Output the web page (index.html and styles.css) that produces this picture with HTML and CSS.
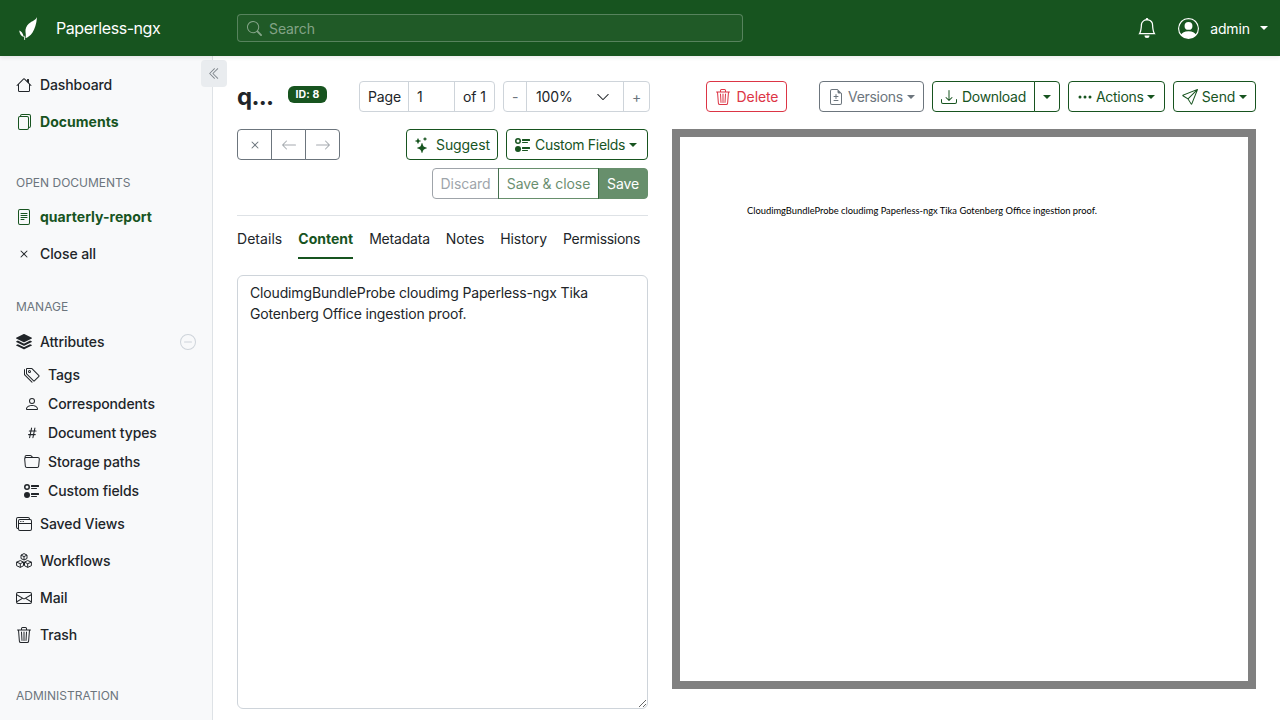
FILE: index.html
```html
<!DOCTYPE html>
<html lang="en">
<head>
<meta charset="utf-8">
<title>Paperless-ngx</title>
<link rel="stylesheet" href="styles.css">
</head>
<body>
<header class="topbar">
  <svg class="logo" viewBox="0 0 18 23" fill="#fff"><path d="M18 0C17 3 13 4 10 6.500 7.500 8.500 6 12 6.500 15c.3 2 .5 4 0 6.200C11 20 17 14 18 0z"/><path d="M.2 13.500c2 .7 3.800 2.500 4.600 6.500C2.500 19.500.7 17 .2 13.500z"/><path d="M4.700 19l.8-.2.7 4.200-.8 0z"/></svg>
  <span class="brand">Paperless-ngx</span>
  <div class="search">
    <svg class="ic" viewBox="0 0 16 16" fill="currentColor"><path d="M11.742 10.344a6.500 6.500 0 1 0-1.397 1.398h-.001c.03.04.062.078.098.115l3.850 3.850a1 1 0 0 0 1.415-1.414l-3.850-3.850a1.007 1.007 0 0 0-.115-.1zM12 6.500a5.500 5.500 0 1 1-11 0 5.500 5.500 0 0 1 11 0z"/></svg>
    <span>Search</span>
  </div>
  <div class="top-right">
    <svg class="bell" viewBox="0 0 16 16" fill="currentColor"><path d="M8 16a2 2 0 0 0 2-2H6a2 2 0 0 0 2 2zM8 1.918l-.797.161A4.002 4.002 0 0 0 4 6c0 .628-.134 2.197-.459 3.742-.16.767-.376 1.566-.663 2.258h10.244c-.287-.692-.502-1.490-.663-2.258C12.134 8.197 12 6.628 12 6a4.002 4.002 0 0 0-3.203-3.920L8 1.917zM14.220 12c.223.447.481.801.78 1H1c.299-.199.557-.553.78-1C2.680 10.200 3 6.880 3 6c0-2.420 1.720-4.440 4.005-4.901a1 1 0 1 1 1.990 0A5.002 5.002 0 0 1 13 6c0 .88.32 4.200 1.220 6z"/></svg>
    <svg class="avatar" viewBox="0 0 16 16" fill="currentColor"><path d="M11 6a3 3 0 1 1-6 0 3 3 0 0 1 6 0z"/><path fill-rule="evenodd" d="M0 8a8 8 0 1 1 16 0A8 8 0 0 1 0 8zm8-7a7 7 0 0 0-5.468 11.370C3.242 11.226 4.805 10 8 10s4.757 1.225 5.468 2.370A7 7 0 0 0 8 1z"/></svg>
    <span class="user">admin</span>
    <i class="caret"></i>
  </div>
</header>

<div class="shell">
  <nav class="sidebar">
    <button class="collapse" type="button" aria-label="Collapse"><svg class="ic" viewBox="0 0 16 16" fill="currentColor"><path d="M8.354 1.646a.5.5 0 0 1 0 .708L2.707 8l5.647 5.646a.5.5 0 0 1-.708.708l-6-6a.5.5 0 0 1 0-.708l6-6a.5.5 0 0 1 .708 0z"/><path d="M12.354 1.646a.5.5 0 0 1 0 .708L6.707 8l5.647 5.646a.5.5 0 0 1-.708.708l-6-6a.5.5 0 0 1 0-.708l6-6a.5.5 0 0 1 .708 0z"/></svg></button>
    <a class="item"><svg class="ic" viewBox="0 0 16 16" fill="currentColor"><path d="M8.707 1.500a1 1 0 0 0-1.414 0L.646 8.146a.5.5 0 0 0 .708.708L2 8.207V13.500A1.500 1.500 0 0 0 3.500 15h9a1.500 1.500 0 0 0 1.500-1.500V8.207l.646.647a.5.5 0 0 0 .708-.708L13 5.793V2.500a.5.5 0 0 0-.5-.5h-1a.5.5 0 0 0-.5.5v1.293L8.707 1.500ZM13 7.207V13.500a.5.5 0 0 1-.5.5h-9a.5.5 0 0 1-.5-.5V7.207l5-5 5 5Z"/></svg>Dashboard</a>
    <a class="item active"><svg class="ic" viewBox="0 0 16 16" fill="currentColor"><path d="M13 0H6a2 2 0 0 0-2 2 2 2 0 0 0-2 2v10a2 2 0 0 0 2 2h7a2 2 0 0 0 2-2 2 2 0 0 0 2-2V2a2 2 0 0 0-2-2zm0 13V4a2 2 0 0 0-2-2H5a1 1 0 0 1 1-1h7a1 1 0 0 1 1 1v10a1 1 0 0 1-1 1zM3 4a1 1 0 0 1 1-1h7a1 1 0 0 1 1 1v10a1 1 0 0 1-1 1H4a1 1 0 0 1-1-1V4z"/></svg>Documents</a>

    <h6 class="heading">Open documents</h6>
    <a class="item active"><svg class="ic" viewBox="0 0 16 16" fill="currentColor"><path d="M5 4a.5.5 0 0 0 0 1h6a.5.5 0 0 0 0-1H5zm-.5 2.500A.5.5 0 0 1 5 6h6a.5.5 0 0 1 0 1H5a.5.5 0 0 1-.5-.5zM5 8a.5.5 0 0 0 0 1h6a.5.5 0 0 0 0-1H5zm0 2a.5.5 0 0 0 0 1h3a.5.5 0 0 0 0-1H5z"/><path d="M2 2a2 2 0 0 1 2-2h8a2 2 0 0 1 2 2v12a2 2 0 0 1-2 2H4a2 2 0 0 1-2-2V2zm10-1H4a1 1 0 0 0-1 1v12a1 1 0 0 0 1 1h8a1 1 0 0 0 1-1V2a1 1 0 0 0-1-1z"/></svg>quarterly-report</a>
    <a class="item"><svg class="ic" viewBox="0 0 16 16" fill="currentColor"><path d="M4.646 4.646a.5.5 0 0 1 .708 0L8 7.293l2.646-2.647a.5.5 0 0 1 .708.708L8.707 8l2.647 2.646a.5.5 0 0 1-.708.708L8 8.707l-2.646 2.647a.5.5 0 0 1-.708-.708L7.293 8 4.646 5.354a.5.5 0 0 1 0-.708z"/></svg>Close all</a>

    <h6 class="heading tight">Manage</h6>
    <a class="item"><svg class="ic" viewBox="0 0 16 16" fill="currentColor"><path d="M14.120 10.163l1.715.858c.22.11.22.424 0 .534L8.267 15.340a.598.598 0 0 1-.534 0L.165 11.555a.299.299 0 0 1 0-.534l1.716-.858 5.317 2.659c.505.252 1.100.252 1.604 0l5.317-2.660zM7.733.063a.598.598 0 0 1 .534 0l7.568 3.784a.3.3 0 0 1 0 .535L8.267 8.165a.598.598 0 0 1-.534 0L.165 4.382a.299.299 0 0 1 0-.535L7.733.063z"/><path d="M14.120 6.576l1.715.858c.22.11.22.424 0 .534l-7.568 3.784a.598.598 0 0 1-.534 0L.165 7.968a.299.299 0 0 1 0-.534l1.716-.858 5.317 2.659c.505.252 1.100.252 1.604 0l5.317-2.659z"/></svg>Attributes
      <svg class="ic minus" viewBox="0 0 16 16" fill="currentColor"><path d="M8 15A7 7 0 1 1 8 1a7 7 0 0 1 0 14zm0 1A8 8 0 1 0 8 0a8 8 0 0 0 0 16z"/><path d="M4 8a.5.5 0 0 1 .5-.5h7a.5.5 0 0 1 0 1h-7A.5.5 0 0 1 4 8z"/></svg></a>
    <a class="item sub"><svg class="ic" viewBox="0 0 16 16" fill="currentColor"><path d="M3 2v4.586l7 7L14.586 9l-7-7H3zM2 2a1 1 0 0 1 1-1h4.586a1 1 0 0 1 .707.293l7 7a1 1 0 0 1 0 1.414l-4.586 4.586a1 1 0 0 1-1.414 0l-7-7A1 1 0 0 1 2 6.586V2z"/><path d="M5.500 5a.5.5 0 1 1 0-1 .5.5 0 0 1 0 1zm0 1a1.500 1.500 0 1 0 0-3 1.500 1.500 0 0 0 0 3zM1 7.086a1 1 0 0 0 .293.707L8.750 15.250l-.043.043a1 1 0 0 1-1.414 0l-7-7A1 1 0 0 1 0 7.586V3a1 1 0 0 1 1-1v5.086z"/></svg>Tags</a>
    <a class="item sub"><svg class="ic" viewBox="0 0 16 16" fill="currentColor"><path d="M8 8a3 3 0 1 0 0-6 3 3 0 0 0 0 6Zm2-3a2 2 0 1 1-4 0 2 2 0 0 1 4 0Zm4 8c0 1-1 1-1 1H3s-1 0-1-1 1-4 6-4 6 3 6 4Zm-1-.004c-.001-.246-.154-.986-.832-1.664C11.516 10.680 10.289 10 8 10c-2.290 0-3.516.68-4.168 1.332-.678.678-.83 1.418-.832 1.664h10Z"/></svg>Correspondents</a>
    <a class="item sub"><svg class="ic" viewBox="0 0 16 16" fill="currentColor"><path d="M8.390 12.648a1.320 1.320 0 0 0-.015.18c0 .305.21.508.5.508.266 0 .492-.172.555-.477l.554-2.703h1.204c.421 0 .617-.234.617-.547 0-.312-.188-.53-.617-.53h-.985l.516-2.524h1.265c.43 0 .618-.227.618-.547 0-.313-.188-.524-.618-.524h-1.046l.476-2.304a1.060 1.060 0 0 0 .016-.164.51.51 0 0 0-.516-.516.54.54 0 0 0-.539.43l-.523 2.554H7.617l.477-2.304c.008-.04.015-.118.015-.164a.512.512 0 0 0-.523-.516.539.539 0 0 0-.531.43L6.530 5.484H5.414c-.43 0-.617.22-.617.532 0 .312.187.539.617.539h.906l-.515 2.523H4.609c-.421 0-.609.219-.609.531 0 .313.188.547.61.547h.976l-.516 2.492c-.008.04-.015.125-.015.18 0 .305.21.508.5.508.265 0 .492-.172.554-.477l.555-2.703h2.242l-.515 2.492zm-1-6.109h2.266l-.515 2.563H6.859l.532-2.563z"/></svg>Document types</a>
    <a class="item sub"><svg class="ic" viewBox="0 0 16 16" fill="currentColor"><path d="M.54 3.870.5 3a2 2 0 0 1 2-2h3.672a2 2 0 0 1 1.414.586l.828.828A2 2 0 0 0 9.828 3h3.982a2 2 0 0 1 1.992 2.181l-.637 7A2 2 0 0 1 13.174 14H2.826a2 2 0 0 1-1.991-1.819l-.637-7a1.990 1.990 0 0 1 .342-1.310zM2.190 4a1 1 0 0 0-.996 1.090l.637 7a1 1 0 0 0 .995.91h10.348a1 1 0 0 0 .995-.91l.637-7A1 1 0 0 0 13.810 4H2.190zm4.690-1.707A1 1 0 0 0 6.172 2H2.500a1 1 0 0 0-1 .981l.006.139C1.720 3.042 1.950 3 2.190 3h5.396l-.707-.707z"/></svg>Storage paths</a>
    <a class="item sub"><svg class="ic" viewBox="0 0 16 16" fill="currentColor"><path d="M7 2.500a.5.5 0 0 1 .5-.5h7a.5.5 0 0 1 .5.5v1a.5.5 0 0 1-.5.5h-7a.5.5 0 0 1-.5-.5v-1zM0 12a3 3 0 1 1 6 0 3 3 0 0 1-6 0zm7-1.500a.5.5 0 0 1 .5-.5h7a.5.5 0 0 1 .5.5v1a.5.5 0 0 1-.5.5h-7a.5.5 0 0 1-.5-.5v-1zm0-5a.5.5 0 0 1 .5-.5h5a.5.5 0 0 1 0 1h-5a.5.5 0 0 1-.5-.5zm0 8a.5.5 0 0 1 .5-.5h5a.5.5 0 0 1 0 1h-5a.5.5 0 0 1-.5-.5zM3 1a3 3 0 1 0 0 6 3 3 0 0 0 0-6zm0 4.500a1.500 1.500 0 1 1 0-3 1.500 1.500 0 0 1 0 3z"/></svg>Custom fields</a>
    <a class="item"><svg class="ic" viewBox="0 0 16 16" fill="currentColor"><path d="M4.500 6a.5.5 0 1 0 0-1 .5.5 0 0 0 0 1ZM6 6a.5.5 0 1 0 0-1 .5.5 0 0 0 0 1Zm2-.5a.5.5 0 1 1-1 0 .5.5 0 0 1 1 0Z"/><path d="M12 1a2 2 0 0 1 2 2 2 2 0 0 1 2 2v8a2 2 0 0 1-2 2H4a2 2 0 0 1-2-2 2 2 0 0 1-2-2V3a2 2 0 0 1 2-2h10ZM2 12V5a2 2 0 0 1 2-2h9a1 1 0 0 0-1-1H2a1 1 0 0 0-1 1v8a1 1 0 0 0 1 1Zm1-4v5a1 1 0 0 0 1 1h10a1 1 0 0 0 1-1V8H3Zm12-1V5a1 1 0 0 0-1-1H4a1 1 0 0 0-1 1v2h12Z"/></svg>Saved Views</a>
    <a class="item"><svg class="ic" viewBox="0 0 16 16" fill="none" stroke="currentColor" stroke-width="1" stroke-linejoin="round"><path d="M8 .6l3 1.500v3.400L8 7 5 5.500V2.100zM5 2.100l3 1.500 3-1.500M8 3.600V7"/><path d="M4.300 7.600L7.500 9.100v3.600L4.300 14.400 .6 12.700V9.100zM.6 9.100l3.700 1.600 3.200-1.600M4.300 10.700v3.700"/><path d="M11.700 7.600l3.700 1.500v3.600l-3.700 1.700-3.200-1.700V9.100zM8.500 9.100l3.200 1.600 3.700-1.600M11.700 10.700v3.700"/></svg>Workflows</a>
    <a class="item"><svg class="ic" viewBox="0 0 16 16" fill="currentColor"><path d="M0 4a2 2 0 0 1 2-2h12a2 2 0 0 1 2 2v8a2 2 0 0 1-2 2H2a2 2 0 0 1-2-2V4Zm2-1a1 1 0 0 0-1 1v.217l7 4.200 7-4.200V4a1 1 0 0 0-1-1H2Zm13 2.383-4.708 2.825L15 11.105V5.383Zm-.034 6.876-5.640-3.471L8 9.583l-1.326-.795-5.640 3.470A1 1 0 0 0 2 13h12a1 1 0 0 0 .966-.741ZM1 11.105l4.708-2.897L1 5.383v5.722Z"/></svg>Mail</a>
    <a class="item"><svg class="ic" viewBox="0 0 16 16" fill="currentColor"><path d="M6.500 1h3a.5.5 0 0 1 .5.5v1H6v-1a.5.5 0 0 1 .5-.5ZM11 2.500v-1A1.500 1.500 0 0 0 9.500 0h-3A1.500 1.500 0 0 0 5 1.500v1H1.500a.5.5 0 0 0 0 1h.538l.853 10.660A2 2 0 0 0 4.885 16h6.230a2 2 0 0 0 1.994-1.840l.853-10.660h.538a.5.5 0 0 0 0-1H11Zm1.958 1-.846 10.580a1 1 0 0 1-.997.92h-6.230a1 1 0 0 1-.997-.92L3.042 3.500h9.916Zm-7.487 1a.5.5 0 0 1 .528.47l.5 8.500a.5.5 0 0 1-.998.06L5 5.030a.5.5 0 0 1 .47-.53Zm5.058 0a.5.5 0 0 1 .47.53l-.5 8.500a.5.5 0 1 1-.998-.06l.5-8.500a.5.5 0 0 1 .528-.47ZM8 4.500a.5.5 0 0 1 .5.5v8.500a.5.5 0 0 1-1 0V5a.5.5 0 0 1 .5-.5Z"/></svg>Trash</a>

    <h6 class="heading">Administration</h6>
  </nav>

  <main class="main">
    <div class="toolbar">
      <div class="title-cell">
        <h1 class="title">q...</h1>
        <span class="badge">ID: 8</span>
      </div>
      <div class="input-group">
        <span class="cell w-page">Page</span>
        <span class="cell w-num">1</span>
        <span class="cell w-of">of 1</span>
      </div>
      <div class="input-group zoom">
        <span class="cell w-pm muted">-</span>
        <span class="cell w-zoom">100%<svg class="chev" viewBox="0 0 16 16" fill="currentColor"><path d="M1.646 4.646a.5.5 0 0 1 .708 0L8 10.293l5.646-5.647a.5.5 0 0 1 .708.708l-6 6a.5.5 0 0 1-.708 0l-6-6a.5.5 0 0 1 0-.708z"/></svg></span>
        <span class="cell w-plus muted">+</span>
      </div>
      <button class="btn danger delete" type="button"><svg class="ic" viewBox="0 0 16 16" fill="currentColor"><path d="M6.500 1h3a.5.5 0 0 1 .5.5v1H6v-1a.5.5 0 0 1 .5-.5ZM11 2.500v-1A1.500 1.500 0 0 0 9.500 0h-3A1.500 1.500 0 0 0 5 1.500v1H1.500a.5.5 0 0 0 0 1h.538l.853 10.660A2 2 0 0 0 4.885 16h6.230a2 2 0 0 0 1.994-1.840l.853-10.660h.538a.5.5 0 0 0 0-1H11Zm1.958 1-.846 10.580a1 1 0 0 1-.997.92h-6.230a1 1 0 0 1-.997-.92L3.042 3.500h9.916Zm-7.487 1a.5.5 0 0 1 .528.47l.5 8.500a.5.5 0 0 1-.998.06L5 5.030a.5.5 0 0 1 .47-.53Zm5.058 0a.5.5 0 0 1 .47.53l-.5 8.500a.5.5 0 1 1-.998-.06l.5-8.500a.5.5 0 0 1 .528-.47ZM8 4.500a.5.5 0 0 1 .5.5v8.500a.5.5 0 0 1-1 0V5a.5.5 0 0 1 .5-.5Z"/></svg>Delete</button>
      <button class="btn secondary versions" type="button"><svg class="ic" viewBox="0 0 16 16" fill="currentColor"><path d="M8 5a.5.5 0 0 1 .5.5V7H10a.5.5 0 0 1 0 1H8.500v1.500a.5.5 0 0 1-1 0V8H6a.5.5 0 0 1 0-1h1.500V5.500A.5.5 0 0 1 8 5zm-2.500 6.500A.5.5 0 0 1 6 11h4a.5.5 0 0 1 0 1H6a.5.5 0 0 1-.5-.5z"/><path d="M14 14V4.500L9.500 0H4a2 2 0 0 0-2 2v12a2 2 0 0 0 2 2h8a2 2 0 0 0 2-2zM9.500 3A1.500 1.500 0 0 0 11 4.500h2V14a1 1 0 0 1-1 1H4a1 1 0 0 1-1-1V2a1 1 0 0 1 1-1h5.500v2z"/></svg>Versions<i class="caret"></i></button>
      <div class="btn-group download">
        <button class="btn dl" type="button"><svg class="ic" viewBox="0 0 16 16" fill="currentColor"><path d="M.5 9.900a.5.5 0 0 1 .5.5v2.500a1 1 0 0 0 1 1h12a1 1 0 0 0 1-1v-2.500a.5.5 0 0 1 1 0v2.500a2 2 0 0 1-2 2H2a2 2 0 0 1-2-2v-2.500a.5.5 0 0 1 .5-.5z"/><path d="M7.646 11.854a.5.5 0 0 0 .708 0l3-3a.5.5 0 0 0-.708-.708L8.500 10.293V1.500a.5.5 0 0 0-1 0v8.793L5.354 8.146a.5.5 0 1 0-.708.708l3 3z"/></svg>Download</button>
        <button class="btn split" type="button" aria-label="More"><i class="caret"></i></button>
      </div>
      <button class="btn actions" type="button"><svg class="ic" viewBox="0 0 16 16" fill="currentColor"><path d="M3 9.500a1.500 1.500 0 1 1 0-3 1.500 1.500 0 0 1 0 3zm5 0a1.500 1.500 0 1 1 0-3 1.500 1.500 0 0 1 0 3zm5 0a1.500 1.500 0 1 1 0-3 1.500 1.500 0 0 1 0 3z"/></svg>Actions<i class="caret"></i></button>
      <button class="btn send" type="button"><svg class="ic" viewBox="0 0 16 16" fill="currentColor"><path d="M15.854.146a.5.5 0 0 1 .11.54l-5.819 14.547a.75.75 0 0 1-1.329.124l-3.178-4.995L.643 7.184a.75.75 0 0 1 .124-1.330L15.314.037a.5.5 0 0 1 .54.11ZM6.636 10.070l2.761 4.338L14.130 2.576 6.636 10.070Zm6.787-8.201L1.591 6.602l4.339 2.760 7.494-7.493Z"/></svg>Send<i class="caret"></i></button>
    </div>

    <div class="columns">
      <section class="left">
        <div class="row-between">
          <div class="btn-group nav-group">
            <button class="btn secondary w-close" type="button" aria-label="Close"><svg class="ic" viewBox="0 0 16 16" fill="currentColor"><path d="M4.646 4.646a.5.5 0 0 1 .708 0L8 7.293l2.646-2.647a.5.5 0 0 1 .708.708L8.707 8l2.647 2.646a.5.5 0 0 1-.708.708L8 8.707l-2.646 2.647a.5.5 0 0 1-.708-.708L7.293 8 4.646 5.354a.5.5 0 0 1 0-.708z"/></svg></button>
            <button class="btn secondary w-arrow" type="button" aria-label="Previous"><svg class="ic" viewBox="0 0 16 16" fill="currentColor"><path d="M15 8a.5.5 0 0 0-.5-.5H2.707l3.147-3.146a.5.5 0 1 0-.708-.708l-4 4a.5.5 0 0 0 0 .708l4 4a.5.5 0 0 0 .708-.708L2.707 8.500H14.500A.5.5 0 0 0 15 8z"/></svg></button>
            <button class="btn secondary w-arrow" type="button" aria-label="Next"><svg class="ic" viewBox="0 0 16 16" fill="currentColor"><path d="M1 8a.5.5 0 0 1 .5-.5h11.793l-3.147-3.146a.5.5 0 0 1 .708-.708l4 4a.5.5 0 0 1 0 .708l-4 4a.5.5 0 0 1-.708-.708L13.293 8.500H1.500A.5.5 0 0 1 1 8z"/></svg></button>
          </div>
          <div class="pair">
            <button class="btn suggest" type="button"><svg class="ic" viewBox="0 0 16 16" fill="currentColor"><path d="M7.657 6.247c.11-.33.576-.33.686 0l.645 1.937a2.890 2.890 0 0 0 1.829 1.828l1.936.645c.33.11.33.576 0 .686l-1.937.645a2.890 2.890 0 0 0-1.828 1.829l-.645 1.936a.361.361 0 0 1-.686 0l-.645-1.937a2.890 2.890 0 0 0-1.828-1.828l-1.937-.645a.361.361 0 0 1 0-.686l1.937-.645a2.890 2.890 0 0 0 1.828-1.828l.645-1.937zM3.794 1.148a.217.217 0 0 1 .412 0l.387 1.162c.173.518.579.924 1.097 1.097l1.162.387a.217.217 0 0 1 0 .412l-1.162.387A1.734 1.734 0 0 0 4.593 5.690l-.387 1.162a.217.217 0 0 1-.412 0L3.407 5.690A1.734 1.734 0 0 0 2.310 4.593l-1.162-.387a.217.217 0 0 1 0-.412l1.162-.387A1.734 1.734 0 0 0 3.407 2.310l.387-1.162zM10.863.099a.145.145 0 0 1 .274 0l.258.774c.115.346.386.617.732.732l.774.258a.145.145 0 0 1 0 .274l-.774.258a1.156 1.156 0 0 0-.732.732l-.258.774a.145.145 0 0 1-.274 0l-.258-.774a1.156 1.156 0 0 0-.732-.732L9.100 2.137a.145.145 0 0 1 0-.274l.774-.258c.346-.115.617-.386.732-.732L10.863.1z"/></svg>Suggest</button>
            <button class="btn fields" type="button"><svg class="ic" viewBox="0 0 16 16" fill="currentColor"><path d="M7 2.500a.5.5 0 0 1 .5-.5h7a.5.5 0 0 1 .5.5v1a.5.5 0 0 1-.5.5h-7a.5.5 0 0 1-.5-.5v-1zM0 12a3 3 0 1 1 6 0 3 3 0 0 1-6 0zm7-1.500a.5.5 0 0 1 .5-.5h7a.5.5 0 0 1 .5.5v1a.5.5 0 0 1-.5.5h-7a.5.5 0 0 1-.5-.5v-1zm0-5a.5.5 0 0 1 .5-.5h5a.5.5 0 0 1 0 1h-5a.5.5 0 0 1-.5-.5zm0 8a.5.5 0 0 1 .5-.5h5a.5.5 0 0 1 0 1h-5a.5.5 0 0 1-.5-.5zM3 1a3 3 0 1 0 0 6 3 3 0 0 0 0-6zm0 4.500a1.500 1.500 0 1 1 0-3 1.500 1.500 0 0 1 0 3z"/></svg>Custom Fields<i class="caret"></i></button>
          </div>
        </div>
        <div class="row-end">
          <div class="btn-group save-group">
            <button class="btn secondary discard" type="button">Discard</button>
            <button class="btn close-save" type="button">Save &amp; close</button>
            <button class="btn save" type="button">Save</button>
          </div>
        </div>
        <hr class="rule">
        <ul class="tabs">
          <li class="wide">Details</li>
          <li class="on">Content</li>
          <li class="meta">Metadata</li>
          <li>Notes</li>
          <li>History</li>
          <li class="narrow">Permissions</li>
        </ul>
        <textarea class="content">CloudimgBundleProbe cloudimg Paperless-ngx Tika Gotenberg Office ingestion proof.</textarea>
      </section>
      <section class="viewer">
        <div class="page"><p class="page-text">CloudimgBundleProbe cloudimg Paperless-ngx Tika Gotenberg Office ingestion proof.</p></div>
      </section>
    </div>
  </main>
</div>
</body>
</html>
```

FILE: styles.css
```css
* { box-sizing: border-box; }
html, body { height: 100%; }
body {
  margin: 0;
  overflow: hidden;
  background: #fff;
  color: #212529;
  font: 400 14px/21px Inter, "Liberation Sans", sans-serif;
  letter-spacing: -.1px;
}
svg { flex: none; display: block; }
.ic { width: 16px; height: 16px; }

.topbar {
  height: 56px;
  display: flex;
  align-items: center;
  background: #17541f;
  color: #fff;
  padding-left: 19px;
  box-shadow: 0 2px 4px rgba(0, 0, 0, .08);
  position: relative;
  z-index: 2;
}
.logo { width: 18px; height: 23px; }
.brand { margin-left: 19px; width: 181px; font-size: 16px; line-height: 24px; letter-spacing: -.45px; }
.search {
  width: 506px;
  height: 28px;
  display: flex;
  align-items: center;
  gap: 7px;
  padding-left: 9px;
  color: rgba(255, 255, 255, .45);
  background: rgba(255, 255, 255, .04);
  border: 1px solid rgba(255, 255, 255, .25);
  border-radius: 4px;
}
.search .ic { width: 15px; height: 15px; }
.top-right { margin-left: auto; display: flex; align-items: center; }
.bell { width: 20px; height: 20px; margin-right: 21px; }
.avatar { width: 21px; height: 21px; margin-right: 11px; }
.user { margin-right: 10px; }
.top-right .caret { margin-right: 12px; margin-left: 0; }

.caret {
  display: inline-block;
  width: 0;
  height: 0;
  margin-left: 4px;
  border-top: 4px solid currentColor;
  border-left: 4px solid transparent;
  border-right: 4px solid transparent;
}

.shell { display: flex; height: 664px; }
.sidebar {
  width: 213px;
  flex: none;
  padding-top: 11px;
  background: #f8f9fa;
  border-right: 1px solid #dee2e6;
  position: relative;
}
.collapse {
  position: absolute;
  left: 201px;
  top: 4px;
  width: 26px;
  height: 27px;
  padding: 0 0 0 7px;
  border: 0;
  border-radius: 4px;
  background: #e9ecef;
  color: #7a8087;
}
.collapse .ic { width: 13px; height: 13px; }
.item {
  display: flex;
  align-items: center;
  gap: 8px;
  height: 37px;
  padding: 0 0 2px 16px;
  color: #212529;
  font-weight: 500;
}
.item.active { color: #17541f; font-weight: 700; letter-spacing: .03px; }
.item.sub { height: 29px; padding-left: 24px; }
.minus { margin-left: auto; margin-right: 16px; color: #ced4da; }
.heading {
  margin: 33px 0 7px;
  padding-left: 16px;
  font-size: 12px;
  font-weight: 400;
  line-height: 18px;
  letter-spacing: 0;
  text-transform: uppercase;
  color: #6c757d;
}
.heading.tight { margin: 25px 0 8px; }

.main { flex: 1; min-width: 0; padding: 25px 24px 0; }
.toolbar { display: flex; align-items: center; height: 31px; }
.title-cell { width: 122px; height: 31px; display: flex; flex: none; align-items: flex-start; }
.title { margin: 0; width: 51px; font-size: 24px; font-weight: 700; line-height: 31px; letter-spacing: -.7px; }
.badge {
  margin-top: 5px;
  width: 39px;
  height: 17px;
  text-align: center;
  border-radius: 6px;
  background: #17541f;
  color: #fff;
  font-size: 10.500px;
  font-weight: 700;
  line-height: 17px;
  letter-spacing: .1px;
}
.input-group {
  display: flex;
  height: 31px;
  border: 1px solid #ced4da;
  border-radius: 4px;
  flex: none;
}
.input-group.zoom { margin-left: 8px; }
.cell {
  display: flex;
  align-items: center;
  border-left: 1px solid #ced4da;
}
.cell:first-child { border-left: 0; }
.w-page { width: 48px; padding-left: 8px; }
.w-num { width: 46px; padding-left: 8px; }
.w-of { width: 40px; padding-left: 8px; }
.w-pm { width: 22px; padding-left: 8px; }
.w-zoom { width: 97px; padding-left: 9px; justify-content: space-between; padding-right: 13px; }
.w-plus { width: 26px; padding-left: 8px; }
.muted { color: #6c757d; }
.chev { width: 14px; height: 14px; }

.btn {
  display: inline-flex;
  align-items: center;
  justify-content: center;
  gap: 6px;
  height: 31px;
  padding: 0 8px;
  flex: none;
  white-space: nowrap;
  background: #fff;
  color: #17541f;
  border: 1px solid #17541f;
  border-radius: 4px;
  font: inherit;
  letter-spacing: -.1px;
}
.btn .caret { margin-left: 0; }
.btn.danger { color: #dc3545; border-color: #dc3545; }
.btn.secondary { color: #6c757d; border-color: #6c757d; }
.delete { width: 81px; margin-left: 56px; }
.versions, .actions, .fields, .dl { justify-content: flex-start; letter-spacing: -.3px; }
.versions { width: 105px; margin-left: 32px; gap: 4px; }
.download { margin-left: 8px; }
.actions { width: 97px; margin-left: 8px; gap: 3px; }
.send { width: 83px; margin-left: 8px; gap: 4px; }

.btn-group { display: flex; flex: none; }
.btn-group .btn { border-radius: 0; }
.btn-group .btn:first-child { border-radius: 4px 0 0 4px; }
.btn-group .btn:last-child { border-radius: 0 4px 4px 0; }
.btn-group .btn + .btn { margin-left: -1px; }
.download .dl { width: 103px; gap: 5px; }
.split { width: 26px; }

.columns { display: flex; gap: 24px; margin-top: 17px; }
.left { width: 411px; flex: none; }
.row-between { display: flex; justify-content: space-between; }
.pair { display: flex; gap: 8px; }
.w-close { width: 35px; }
.w-arrow { width: 35px; }
.w-arrow .ic { opacity: .6; }
.suggest { width: 92px; }
.fields { width: 142px; gap: 4px; }
.row-end { display: flex; justify-content: flex-end; margin-top: 8px; }
.save-group .btn { opacity: .65; }
.discard { width: 67px; }
.close-save { width: 101px; }
.save-group .save { width: 50px; background: #17541f; color: #fff; }
.rule { margin: 16px 0 0; border: 0; border-top: 1px solid #dee2e6; }
.tabs {
  display: flex;
  gap: 16px;
  height: 43px;
  margin: 0 0 16px;
  padding: 0;
  list-style: none;
}
.tabs li { padding-top: 12px; }
.tabs .wide { letter-spacing: .05px; }
.tabs .on { color: #17541f; font-weight: 700; letter-spacing: 0; border-bottom: 2px solid #17541f; }
.tabs .meta { letter-spacing: -.2px; }
.tabs .narrow { letter-spacing: -.3px; }
.content {
  display: block;
  width: 411px;
  height: 434px;
  padding: 6px 12px;
  color: #212529;
  border: 1px solid #ced4da;
  border-radius: 6px;
  font: inherit;
  letter-spacing: -.15px;
}
.viewer { width: 584px; flex: none; }
.page {
  height: 560px;
  background: #fff;
  border: 8px solid #808080;
  padding: 67px 0 0 67px;
}
.page-text {
  margin: 0;
  color: #000;
  font: 400 9.360px/14px Lato, sans-serif;
  letter-spacing: 0;
  white-space: nowrap;
}
```
